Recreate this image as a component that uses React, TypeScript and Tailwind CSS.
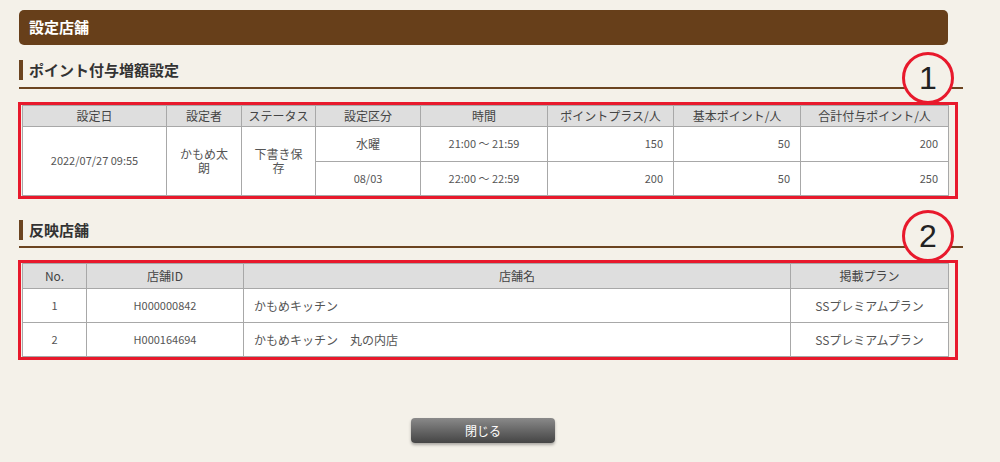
const font = { fontFamily: '"Noto Sans CJK JP", "Liberation Sans", sans-serif' };

function Circle({ n }: { n: string }) {
  return (
    <div
      className="absolute right-[1px] -top-[53px] w-[52px] h-[52px] rounded-full border-[3px] border-[#e8192c] bg-[#f4f1e9] flex items-center justify-center text-[32px] text-[#222] leading-none"
      style={{ fontFamily: '"Liberation Sans", sans-serif' }}
    >
      {n}
    </div>
  );
}

function SectionTitle({ title }: { title: string }) {
  return (
    <div className="ml-[19px] mr-[37px] border-b-2 border-[#6b4420] pb-[5px] flex items-center">
      <span className="w-[4px] h-[20px] bg-[#6b4420] mr-[6px]" />
      <span className="text-[15px] font-bold text-[#333]">{title}</span>
    </div>
  );
}

const th = "bg-[#dedede] border border-[#a8a8a8] font-normal text-[12px] text-[#444] h-[21px] leading-none";
const td = "bg-white border border-[#a8a8a8] text-[11px] text-[#555]";

export default function App() {
  return (
    <div className="w-[1000px] h-[462px] bg-[#f4f1e9] pt-[10px] overflow-hidden" style={font}>
      <div className="mx-[19px] w-[929px] h-[35px] bg-[#673f1a] rounded-[5px] flex items-center px-[10px] text-white font-bold text-[15px]">
        設定店舗
      </div>

      <div className="mt-[14px]"><SectionTitle title="ポイント付与増額設定" /></div>

      <div className="relative mt-[13px] ml-[18px] w-[940px] border-[3px] border-[#e8192c] pl-[1px] pr-[7px]">
        <Circle n="1" />
        <table className="w-[926px] border-collapse table-fixed">
          <colgroup>
            <col className="w-[144px]" /><col className="w-[75px]" /><col className="w-[74px]" />
            <col className="w-[105px]" /><col className="w-[127px]" /><col className="w-[126px]" />
            <col className="w-[127px]" /><col className="w-[148px]" />
          </colgroup>
          <thead>
            <tr>
              {["設定日", "設定者", "ステータス", "設定区分", "時間", "ポイントプラス/人", "基本ポイント/人", "合計付与ポイント/人"].map((h) => (
                <th key={h} className={th}>{h}</th>
              ))}
            </tr>
          </thead>
          <tbody>
            <tr className="h-[35px]">
              <td rowSpan={2} className={td + " text-center"}>2022/07/27 09:55</td>
              <td rowSpan={2} className={td + " text-center text-[12px] leading-[14px] px-[8px]"}>かもめ太朗</td>
              <td rowSpan={2} className={td + " text-center text-[12px] leading-[14px] px-[8px]"}>下書き保存</td>
              <td className={td + " text-center text-[12px]"}>水曜</td>
              <td className={td + " text-center"}>21:00 〜 21:59</td>
              <td className={td + " text-right pr-[10px]"}>150</td>
              <td className={td + " text-right pr-[10px]"}>50</td>
              <td className={td + " text-right pr-[10px]"}>200</td>
            </tr>
            <tr className="h-[34px]">
              <td className={td + " text-center"}>08/03</td>
              <td className={td + " text-center"}>22:00 〜 22:59</td>
              <td className={td + " text-right pr-[10px]"}>200</td>
              <td className={td + " text-right pr-[10px]"}>50</td>
              <td className={td + " text-right pr-[10px]"}>250</td>
            </tr>
          </tbody>
        </table>
      </div>

      <div className="mt-[20px]"><SectionTitle title="反映店舗" /></div>

      <div className="relative mt-[12px] ml-[18px] w-[940px] border-[3px] border-[#e8192c] pl-[1px] pr-[7px]">
        <Circle n="2" />
        <table className="w-[926px] border-collapse table-fixed">
          <colgroup>
            <col className="w-[64px]" /><col className="w-[157px]" /><col className="w-[547px]" /><col className="w-[158px]" />
          </colgroup>
          <thead>
            <tr className="h-[25px]">
              {["No.", "店舗ID", "店舗名", "掲載プラン"].map((h) => (
                <th key={h} className={th}>{h}</th>
              ))}
            </tr>
          </thead>
          <tbody>
            {[["1", "H000000842", "かもめキッチン"], ["2", "H000164694", "かもめキッチン　丸の内店"]].map((r) => (
              <tr key={r[0]} className="h-[34px]">
                <td className={td + " text-center"}>{r[0]}</td>
                <td className={td + " text-center"}>{r[1]}</td>
                <td className={td + " pl-[10px] text-[12px]"}>{r[2]}</td>
                <td className={td + " text-center text-[12px]"}>SSプレミアムプラン</td>
              </tr>
            ))}
          </tbody>
        </table>
      </div>

      <div className="flex justify-center mt-[58px] pr-[34px]">
        <button className="w-[144px] h-[25px] rounded-[4px] bg-gradient-to-b from-[#8a8a8a] to-[#454545] text-white text-[12px] shadow-[0_2px_3px_rgba(0,0,0,0.3)]">
          閉じる
        </button>
      </div>
    </div>
  );
}
